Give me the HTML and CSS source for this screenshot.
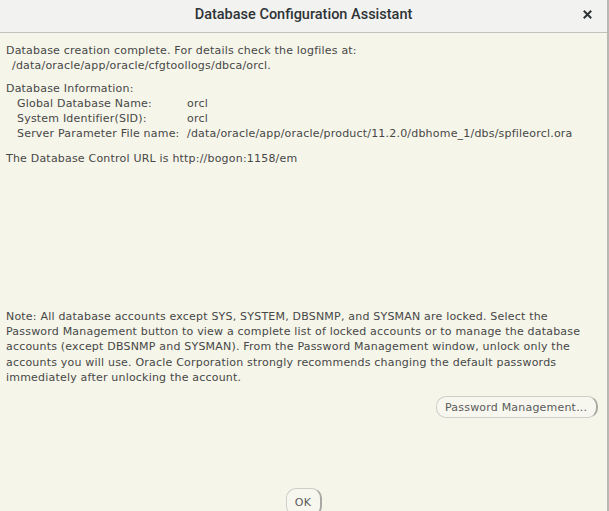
FILE: index.html
```html
<!DOCTYPE html>
<html>
<head>
<meta charset="utf-8">
<link rel="stylesheet" href="styles.css">
</head>
<body>
<div class="window">
  <header class="titlebar">
    <span class="title">Database Configuration Assistant</span>
    <svg class="close" width="9" height="9" viewBox="0 0 9 9"><path d="M1.5 1.5 L7.5 7.5 M7.5 1.5 L1.5 7.5" stroke="#2e3436" stroke-width="2" stroke-linecap="square"/></svg>
  </header>
  <main class="content">
    <div class="block">
      <div>Database creation complete. For details check the logfiles at:</div>
      <div class="path">/data/oracle/app/oracle/cfgtoollogs/dbca/orcl.</div>
    </div>
    <div class="block info">
      <div>Database Information:</div>
      <div class="row"><span class="label">Global Database Name:</span><span>orcl</span></div>
      <div class="row"><span class="label">System Identifier(SID):</span><span>orcl</span></div>
      <div class="row"><span class="label">Server Parameter File name:</span><span>/data/oracle/app/oracle/product/11.2.0/dbhome_1/dbs/spfileorcl.ora</span></div>
    </div>
    <div class="block url">The Database Control URL is http://bogon:1158/em</div>
    <div class="spacer"></div>
    <div class="note">
      Note: All database accounts except SYS, SYSTEM, DBSNMP, and SYSMAN are locked. Select the<br>
      Password Management button to view a complete list of locked accounts or to manage the database<br>
      accounts (except DBSNMP and SYSMAN). From the Password Management window, unlock only the<br>
      accounts you will use. Oracle Corporation strongly recommends changing the default passwords<br>
      immediately after unlocking the account.
    </div>
    <div class="btnrow"><button class="btn pm">Password Management...</button></div>
    <div class="okrow"><button class="btn ok">OK</button></div>
  </main>
</div>
</body>
</html>
```
FILE: styles.css
```css
html, body {
  margin: 0;
  padding: 0;
  height: 100%;
  overflow: hidden;
}
body {
  background: #f5f5e9;
}
.window {
  width: 609px;
  height: 511px;
  display: flex;
  flex-direction: column;
  box-sizing: border-box;
  border-right: 2px solid #b9b9b4;
}
.titlebar {
  height: 32px;
  flex: none;
  background: #f2f2f1;
  border-bottom: 1px solid #c2c2bd;
  display: flex;
  align-items: center;
  justify-content: center;
  position: relative;
  font-family: "Roboto", "DejaVu Sans", sans-serif;
}
.title {
  font-size: 14.5px;
  font-weight: 500;
  color: #2e3436;
  margin-top: -3px;
}
.close {
  position: absolute;
  right: 15px;
  top: 10px;
}
.content {
  flex: 1;
  display: flex;
  flex-direction: column;
  padding: 10px 0 0 6px;
  font-family: "DejaVu Sans", sans-serif;
  font-size: 11px;
  letter-spacing: 0.2px;
  line-height: 15px;
  color: #474747;
  overflow: hidden;
}
.block {
  white-space: nowrap;
}
.path {
  padding-left: 6px;
}
.info {
  margin-top: 8px;
}
.row {
  display: flex;
  padding-left: 11px;
}
.label {
  width: 170px;
  flex: none;
}
.url {
  margin-top: 10px;
}
.spacer {
  flex: 1;
}
.note {
  white-space: nowrap;
  line-height: 15.2px;
}
.btnrow {
  display: flex;
  justify-content: flex-end;
  padding-right: 9px;
  margin-top: 11px;
}
.btn {
  font-family: "DejaVu Sans", sans-serif;
  font-size: 11px;
  letter-spacing: 0.2px;
  color: #5a5a5a;
  background: #f7f7ef;
  border: 1px solid #cfcfc8;
  border-right: 2px solid #a9a9a4;
  border-radius: 10px;
  height: 22px;
  padding: 0 8px;
  box-sizing: border-box;
}
.pm {
  width: 162px;
  text-align: left;
}
.okrow {
  display: flex;
  justify-content: center;
  margin-top: 70px;
  height: 22px;
  padding-right: 6px;
  margin-bottom: 1px;
}
.ok {
  width: 36px;
  height: 28px;
  padding: 0;
}
```
